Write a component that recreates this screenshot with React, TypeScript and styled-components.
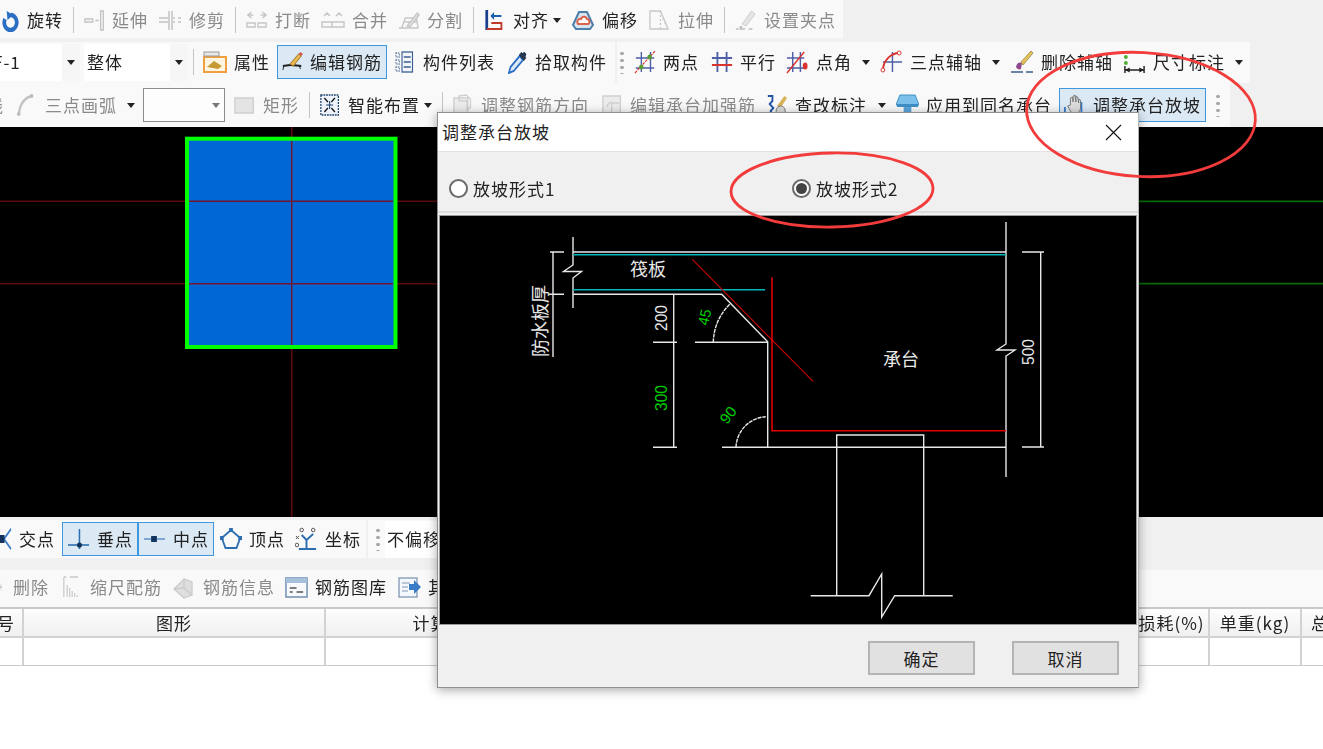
import React from "react";
import styled, { createGlobalStyle } from "styled-components";

const GlobalStyle = createGlobalStyle`
  html, body {
    margin: 0;
    padding: 0;
    background: #fff;
    overflow: hidden;
  }
  body {
    font-family: "Noto Sans CJK SC", "Noto Sans", sans-serif;
    font-size: 17px;
    letter-spacing: 1px;
    color: #222;
  }
`;

const Page = styled.div`
  position: relative;
  width: 1323px;
  height: 749px;
  overflow: hidden;
  display: flex;
  flex-direction: column;
  background: #f0f0f0;
`;

const ToolRow = styled.div<{ $h: number; $mb?: number }>`
  display: flex;
  align-items: stretch;
  gap: 2px;
  height: ${(p) => p.$h}px;
  margin-bottom: ${(p) => p.$mb ?? 0}px;
  flex: none;
`;

const Bar = styled.div<{ $w?: number; $pt?: number; $pb?: number }>`
  display: flex;
  align-items: center;
  flex: none;
  box-sizing: border-box;
  width: ${(p) => (p.$w ? `${p.$w}px` : "auto")};
  padding: ${(p) => p.$pt ?? 0}px 0 ${(p) => p.$pb ?? 0}px;
  background: #f9f9f9;
  white-space: nowrap;
  filter: blur(0.45px);
`;

const ToolBox = styled.div<{ $active?: boolean; $disabled?: boolean; $ml?: number; $flush?: boolean }>`
  display: flex;
  align-items: center;
  flex: none;
  height: 34px;
  box-sizing: border-box;
  border: 1px solid ${(p) => (p.$active ? "#3f97e0" : "transparent")};
  background: ${(p) => (p.$active ? "#dbe9f5" : "transparent")};
  padding: 0 4px;
  padding-left: ${(p) => (p.$flush ? 0 : 4)}px;
  border-left-width: ${(p) => (p.$flush ? 0 : 1)}px;
  margin-left: ${(p) => p.$ml ?? 0}px;
  color: ${(p) => (p.$disabled ? "#8a8a8a" : "#222")};
`;

const IconSlot = styled.span<{ $w: number }>`
  display: block;
  flex: none;
  width: ${(p) => p.$w}px;
  height: 24px;
  margin-right: 7px;
  svg {
    display: block;
    width: 100%;
    height: 100%;
  }
`;

const Label = styled.span`
  padding-bottom: 2px;
`;

const Caret = styled.span<{ $gap: number }>`
  flex: none;
  width: 0;
  height: 0;
  margin-left: ${(p) => p.$gap}px;
  border-left: 4px solid transparent;
  border-right: 4px solid transparent;
  border-top: 5px solid #222;
`;

const Sep = styled.span<{ $mr?: number }>`
  flex: none;
  width: 1px;
  height: 26px;
  background: #c4c4c4;
  margin: 0 ${(p) => p.$mr ?? 5}px 0 5px;
`;

const Grip = styled.span<{ $ml: number; $mr: number }>`
  flex: none;
  width: 4px;
  height: 24px;
  margin: 0 ${(p) => p.$mr}px 0 ${(p) => p.$ml}px;
  background: radial-gradient(circle, #a8a8a8 1.6px, transparent 2px) 0 0 / 4px 7px repeat-y;
`;

const SelectBox = styled.div<{ $w: number; $ml?: number }>`
  display: flex;
  align-items: center;
  flex: none;
  width: ${(p) => p.$w}px;
  height: 37px;
  margin-left: ${(p) => p.$ml ?? 0}px;
  background: #fff;
  overflow: hidden;
`;

const SelectText = styled.span<{ $pad: number }>`
  flex: 1;
  margin-left: ${(p) => p.$pad}px;
  padding-bottom: 2px;
`;

const SelectArrow = styled.span`
  display: flex;
  align-items: center;
  justify-content: center;
  flex: none;
  width: 18px;
  height: 100%;
  background: #f6f6f6;
`;

const EmptySelect = styled.div`
  display: flex;
  align-items: center;
  justify-content: flex-end;
  flex: none;
  box-sizing: border-box;
  width: 82px;
  height: 34px;
  margin-left: 3px;
  padding-right: 4px;
  background: #fdfdfd;
  border: 1px solid #8c8c8c;
`;

const GrayCaret = styled.span`
  width: 0;
  height: 0;
  border-left: 4px solid transparent;
  border-right: 4px solid transparent;
  border-top: 5px solid #777;
`;

const Canvas = styled.svg`
  display: block;
  flex: none;
  width: 1323px;
  height: 390px;
  background: #000;
`;

const SnapArea = styled.div`
  display: flex;
  flex: none;
  height: 53px;
  padding-top: 3px;
  box-sizing: border-box;
`;

const SteelBar = styled(Bar)`
  flex: none;
  height: 39px;
  width: 1323px;
  border-bottom: 2px solid #c9c9c9;
`;

const Table = styled.div`
  display: grid;
  grid-template-columns: 24px 302px 247px 562px 75px 92px 1fr;
  grid-template-rows: 29px 27px;
  flex: none;
  background: #fff;
  border-bottom: 1px solid #c9c9c9;
`;

const HeadCell = styled.div<{ $left?: boolean }>`
  display: flex;
  align-items: center;
  justify-content: ${(p) => (p.$left ? "flex-start" : "center")};
  padding-left: ${(p) => (p.$left ? "9px" : "0")};
  overflow: hidden;
  white-space: nowrap;
  background: linear-gradient(#fdfdfd, #f0f0f0);
  border-right: 2px solid #d2d2d2;
  border-bottom: 2px solid #d2d2d2;
  box-sizing: border-box;
  font-size: 17px;
  filter: blur(0.4px);
  &:nth-child(7) {
    border-right: 0;
  }
`;

const NumberCell = styled(HeadCell)`
  justify-content: flex-end;
  padding-right: 7px;
`;

const BodyCell = styled.div`
  border-right: 2px solid #d2d2d2;
  box-sizing: border-box;
  &:last-child {
    border-right: 0;
  }
`;

const Blank = styled.div`
  flex: 1;
  background: #fff;
`;

const Dialog = styled.div`
  position: absolute;
  left: 437px;
  top: 112px;
  width: 702px;
  height: 576px;
  box-sizing: border-box;
  display: flex;
  flex-direction: column;
  background: #f0f0f0;
  border: 1px solid #8f8f8f;
  border-right-color: #b5b5b5;
  box-shadow: 0 2px 10px rgba(0, 0, 0, 0.35);
`;

const TitleBar = styled.div`
  display: flex;
  align-items: center;
  justify-content: space-between;
  flex: none;
  height: 39px;
  padding: 0 16px 2px 4px;
  background: #fff;
  border-bottom: 1px solid #e2e2e2;
  box-sizing: border-box;
`;

const CloseIcon = styled.svg`
  display: block;
  width: 17px;
  height: 17px;
  margin-top: 2px;
`;

const RadioRow = styled.div`
  display: flex;
  align-items: center;
  flex: none;
  height: 61px;
  padding: 13px 0 0 11px;
  box-sizing: border-box;
  border-bottom: 2px solid #dcdcdc;
`;

const RadioLabel = styled.label<{ $w?: number }>`
  display: flex;
  align-items: center;
  gap: 5px;
  width: ${(p) => (p.$w ? `${p.$w}px` : "auto")};
  filter: blur(0.3px);
`;

const RadioMark = styled.span<{ $checked?: boolean }>`
  position: relative;
  display: block;
  flex: none;
  width: 19px;
  height: 19px;
  box-sizing: border-box;
  border-radius: 50%;
  border: 2px solid #6a6a6a;
  background: #fff;
  &::after {
    content: "";
    display: ${(p) => (p.$checked ? "block" : "none")};
    position: absolute;
    inset: 2px;
    border-radius: 50%;
    background: #444;
  }
`;

const Figure = styled.svg`
  display: block;
  flex: none;
  width: 696px;
  height: 408px;
  margin: 3px 0 0 2px;
  background: #000;
  outline: 1px solid #9a9a9a;
`;

const Footer = styled.div`
  display: flex;
  justify-content: flex-end;
  gap: 37px;
  padding: 17px 19px 0 0;
`;

const DialogButton = styled.button`
  width: 107px;
  height: 34px;
  padding: 0;
  font: inherit;
  letter-spacing: 1px;
  color: #222;
  background: #e1e1e1;
  border: 2px solid #b4b4b4;
`;

const Marks = styled.svg`
  position: absolute;
  left: 0;
  top: 0;
  width: 1323px;
  height: 749px;
  pointer-events: none;
`;

const icons: Record<string, React.ReactNode> = {
  rotate: (
    <>
      <path d="M13 7a7.500 7.500 0 1 1-7 4" fill="none" stroke="#2a6fc4" strokeWidth="4.500" />
      <path d="M8 3l8 4-7 5z" fill="#2a6fc4" />
    </>
  ),
  extend: (
    <g fill="none" stroke="#c2c2c2" strokeWidth="1.500">
      <path d="M1 11h9v3H1zM13 12.500h4" />
      <path d="M19 3h3v19h-3z" />
    </g>
  ),
  trim: (
    <g fill="none" stroke="#c2c2c2" strokeWidth="1.500">
      <path d="M1 10h9M1 14h9M15 10h2M15 14h2M20 10h3M20 14h3" />
      <path d="M11 3v19M14 3v19" />
    </g>
  ),
  breakLine: (
    <g fill="none" stroke="#c6c6c6" strokeWidth="1.500">
      <path d="M2 7h6M6 4L2 7l4 3M22 7h-6M18 4l4 3-4 3" />
      <path d="M1 15h9v4H1zM13 15h9v4h-9z" />
    </g>
  ),
  merge: (
    <g fill="none" stroke="#c6c6c6" strokeWidth="1.500">
      <path d="M3 8l3-3 3 3M15 8l3-3 3 3" />
      <path d="M1 14h22v5H1zM11 14v5" />
    </g>
  ),
  split: (
    <g fill="none" stroke="#c6c6c6" strokeWidth="1.500">
      <path d="M1 20h21M4 20l4-10h12l2 10M6 14h14" />
      <path d="M10 18L21 5l2 2-10 12z" fill="#e2e2e2" />
    </g>
  ),
  align: (
    <>
      <path d="M3 2v20" stroke="#1b3f8c" strokeWidth="3" />
      <path d="M3 21h16v-6H8" fill="none" stroke="#c0392b" strokeWidth="2" />
      <path d="M8 8h11" stroke="#1b5fae" strokeWidth="2" />
      <path d="M11 4L7 8l4 4z" fill="#1b5fae" />
    </>
  ),
  offset: (
    <>
      <path d="M8 4h8l6 13-3 4H5l-3-4z" fill="#d8e4ef" stroke="#4b7ea8" strokeWidth="2" />
      <path d="M7 16c-2-3 1-6 3-5 1-3 5-3 6 0 3 0 3 5 1 5z" fill="#fff" stroke="#d9624f" strokeWidth="2" />
    </>
  ),
  stretch: (
    <g fill="none" stroke="#c8c8c8" strokeWidth="1.400">
      <path d="M2 3h11l8 18H2z" />
      <path d="M13 3v18M16 10v2M18 14v2" strokeDasharray="2 2" />
    </g>
  ),
  grip: (
    <>
      <path d="M1 21h3M8 21h3M15 21h4" stroke="#bdbdbd" strokeWidth="1.500" />
      <rect x="5" y="18" width="3" height="4" fill="#c2c2c2" />
      <path d="M8 16L18 3l4 3-10 12z" fill="#e4e4e4" stroke="#cbcbcb" />
    </>
  ),
  property: (
    <>
      <rect x="1" y="7" width="22" height="15" fill="#fff5e0" stroke="#f0a040" strokeWidth="2" />
      <rect x="1" y="2" width="15" height="4" fill="#e8e8e8" stroke="#9a9a9a" />
      <path d="M4 17l7-6 8 5-4 3z" fill="#c59a32" />
    </>
  ),
  editSteel: (
    <>
      <path d="M1 16c4 0 4-1 9-1s8 1 12 1" fill="none" stroke="#222" strokeWidth="2" />
      <path d="M2 16l-1 4M20 16l1 3" stroke="#222" />
      <path d="M9 14L19 4l3 2-9 10z" fill="#e8b850" stroke="#a07020" />
      <path d="M19 4l2-2 3 2-2 2z" fill="#d9534f" />
    </>
  ),
  list: (
    <g>
      <path d="M1 3h4v4H1zM1 10h4v4H1zM1 17h4v4H1z" fill="none" stroke="#6b85a8" strokeWidth="1.300" strokeDasharray="1.500 1" />
      <rect x="8" y="2" width="12" height="20" fill="#f2f6fb" stroke="#3c5f90" strokeWidth="1.300" />
      <path d="M10 7h8M10 12h8M10 17h8" stroke="#3c5f90" strokeWidth="1.500" />
    </g>
  ),
  pick: (
    <>
      <path d="M1 23l2-6L14 6l4 4L7 21z" fill="#dce9f7" stroke="#2a6fc4" strokeWidth="2" />
      <path d="M13 5l3-3 1 1 3-1 2 2-1 3 1 1-3 3z" fill="#27384f" />
    </>
  ),
  twoPoint: (
    <>
      <path d="M8 2v20M18 2v20M2 8h20M2 18h20" stroke="#4e5fa8" strokeWidth="1.500" />
      <path d="M1 23L23 1" stroke="#d8332f" strokeWidth="1.200" strokeDasharray="3 1" />
      <circle cx="8" cy="17" r="2.500" fill="#5a9a32" />
      <circle cx="17" cy="7" r="2.500" fill="#5a9a32" />
    </>
  ),
  parallel: (
    <>
      <path d="M7 2v20M17 2v20" stroke="#4e5fa8" strokeWidth="2" />
      <path d="M1 8h22" stroke="#4e5fa8" strokeWidth="2" />
      <path d="M1 15h22" stroke="#d8332f" strokeWidth="2" />
    </>
  ),
  angle: (
    <>
      <path d="M7 2v20M15 2v20M1 8h18M1 18h18" stroke="#4e5fa8" strokeWidth="1.500" />
      <path d="M1 23L19 2" stroke="#d8332f" strokeWidth="1.500" />
      <ellipse cx="20" cy="16" rx="2.500" ry="3.500" fill="#d8332f" />
    </>
  ),
  threePoint: (
    <>
      <path d="M13 2v20M3 12h20" stroke="#4e5fa8" strokeWidth="1.500" />
      <path d="M3 21C3 10 12 3 20 3" fill="none" stroke="#d8332f" strokeWidth="2" />
      <circle cx="3" cy="20" r="2" fill="#fff" stroke="#d8332f" />
      <circle cx="20" cy="3" r="2" fill="#fff" stroke="#d8332f" />
    </>
  ),
  eraseAxis: (
    <>
      <path d="M1 22h12M16 22h7" stroke="#3c5f90" strokeWidth="1.600" />
      <path d="M6 17c1-5 4-5 6-4l-1 6c-2 1-4 0-5-2z" fill="#8c4a8c" />
      <path d="M11 12L21 1l2 2-10 12z" fill="#e4c25a" stroke="#9a8540" strokeWidth=".8" />
    </>
  ),
  dimension: (
    <>
      <circle cx="3" cy="7" r="2" fill="#4caf30" />
      <circle cx="3" cy="13" r="2" fill="#4caf30" />
      <path d="M2 16v7M22 16v7M2 20h20" stroke="#222" strokeWidth="1.500" />
      <path d="M2 20l5-2.500v5zM22 20l-5-2.500v5z" fill="#222" />
    </>
  ),
  arc: (
    <>
      <path d="M3 22C4 11 9 5 17 3" fill="none" stroke="#c2c2c2" strokeWidth="2.500" />
      <circle cx="3" cy="21" r="2" fill="#bbb" />
      <circle cx="17" cy="3" r="2" fill="#bbb" />
    </>
  ),
  rect: <rect x="1" y="5" width="20" height="15" fill="#e4e4e4" stroke="#cfcfcf" strokeWidth="1.500" />,
  smart: (
    <>
      <rect x="1" y="2" width="20" height="20" fill="#eef3f9" stroke="#1b3f6c" strokeWidth="1.400" strokeDasharray="2 1" />
      <path d="M5 5l4 4M17 5l-4 4M5 19l4-4M17 19l-4-4" stroke="#111" strokeWidth="1.600" />
      <path d="M11 8v8M7 12h8" stroke="#1b3f6c" strokeWidth="1.200" />
    </>
  ),
  adjustDir: (
    <g fill="none" stroke="#cfcfcf" strokeWidth="1.500">
      <path d="M1 5h16v16H1z" fill="#ececec" />
      <path d="M7 3l8-1 5 4v8l-4 3V8H7z" />
    </g>
  ),
  editCap: (
    <g fill="none" stroke="#cfcfcf" strokeWidth="1.500">
      <path d="M1 3h20v19H1z" fill="#ececec" />
      <path d="M11 22V10h9M6 14c0-3 3-5 5-5" />
    </g>
  ),
  checkMark: (
    <>
      <path d="M2 3h5v5l-3 3 4 4-3 3 3 4" fill="none" stroke="#2153a5" strokeWidth="2" />
      <path d="M12 13L20 3l3 2-8 11z" fill="#d8b35c" />
      <circle cx="16" cy="18" r="5" fill="#d9d9d9" stroke="#777" />
    </>
  ),
  apply: (
    <>
      <path d="M4 2h16l4 10H0z" fill="#7cc0ec" stroke="#3f8fc4" />
      <rect x="8" y="12" width="8" height="12" fill="#5aa5db" />
      <rect x="1" y="11" width="22" height="3" fill="#3f8fc4" />
    </>
  ),
  hand: (
    <>
      <path d="M1 21h7M1 14v7" stroke="#3a7bc8" strokeWidth="2" fill="none" />
      <path d="M19 9v12" stroke="#3a7bc8" strokeWidth="2" />
      <path d="M4 13l3-1V5l2-1 1 5V3l2-1 1 7V3l2 1 1 6V6l2 1v9l-3 5H9z" fill="#dcdcdc" stroke="#777" strokeWidth="1" />
    </>
  ),
  cross: (
    <>
      <path d="M22 2L8 12l14 10" fill="none" stroke="#3a7bc8" strokeWidth="2.600" />
      <rect x="0" y="8" width="9" height="8" fill="#13335f" />
    </>
  ),
  foot: (
    <>
      <path d="M1 18h22" stroke="#2d6eb0" strokeWidth="1.600" />
      <path d="M13 2v20" stroke="#2d6eb0" strokeWidth="1.600" />
      <circle cx="13" cy="18" r="2.600" fill="#13335f" />
    </>
  ),
  middle: (
    <>
      <path d="M1 12h22" stroke="#7fa9d4" strokeWidth="2" />
      <rect x="8.500" y="9" width="6" height="6" fill="#13335f" />
    </>
  ),
  vertex: (
    <>
      <path d="M12 3l10 8-4 10H6L2 11z" fill="none" stroke="#2d6eb0" strokeWidth="2" />
      <rect x="10" y="1" width="4" height="4" fill="#2d6eb0" />
      <rect x="0" y="9" width="4" height="4" fill="#2d6eb0" />
      <rect x="20" y="9" width="4" height="4" fill="#2d6eb0" />
    </>
  ),
  coord: (
    <>
      <path d="M12 21v-8L7 8M12 13l7-6M4 22h18" fill="none" stroke="#2d6eb0" strokeWidth="2" />
      <g fill="none" stroke="#555" strokeWidth="1">
        <circle cx="7" cy="3" r="1.800" />
        <circle cx="19" cy="3" r="1.800" />
        <circle cx="2" cy="18" r="1.800" />
        <path d="M1 9l3 3M4 9l-3 3" />
      </g>
    </>
  ),
  arrowCut: <path d="M0 12h6M3 9l3 3-3 3" fill="none" stroke="#bcbcbc" strokeWidth="1.500" />,
  scale: (
    <g stroke="#c8c8c8" strokeWidth="1.400" fill="none">
      <path d="M1 2h3M8 2h10M1 2v20" />
      <path d="M5 22V10M8 22V13M11 22v-6M14 22v-4M17 22v-2" />
    </g>
  ),
  info: (
    <g fill="#dedede" stroke="#cbcbcb" strokeWidth="1.300">
      <path d="M2 14L12 4l8 3v13l-8 3z" />
      <path d="M12 4v9L2 14M12 13l8 7" fill="none" />
    </g>
  ),
  library: (
    <>
      <rect x="1" y="3" width="22" height="19" fill="#f7f9fc" stroke="#6d8db3" strokeWidth="1.500" />
      <rect x="1" y="3" width="22" height="5" fill="#a7bfdb" />
      <path d="M5 13h7M5 17h3M12 17h7" stroke="#555" strokeWidth="1.400" />
    </>
  ),
  other: (
    <>
      <rect x="2" y="3" width="18" height="19" fill="#f4f7fb" stroke="#8097b3" strokeWidth="1.300" />
      <path d="M5 8h8M5 12h6M5 16h6" stroke="#8097b3" />
      <path d="M12 9h5V5l7 7-7 7v-4h-5z" fill="#3a7bc8" />
    </>
  ),
};

interface ToolProps {
  label?: string;
  icon?: string;
  w?: number;
  caret?: number;
  disabled?: boolean;
  active?: boolean;
  ml?: number;
  flush?: boolean;
}

function Tool({ label, icon, w = 22, caret, disabled, active, ml, flush }: ToolProps) {
  return (
    <ToolBox $active={active} $disabled={disabled} $ml={ml} $flush={flush}>
      {icon && (
        <IconSlot $w={w}>
          <svg viewBox="0 0 24 24" preserveAspectRatio="none">
            {icons[icon]}
          </svg>
        </IconSlot>
      )}
      <Label>{label}</Label>
      {caret !== undefined && <Caret $gap={caret} />}
    </ToolBox>
  );
}

function ComboBox({ text, w, pad, ml }: { text: string; w: number; pad: number; ml?: number }) {
  return (
    <SelectBox $w={w} $ml={ml}>
      <SelectText $pad={pad}>{text}</SelectText>
      <SelectArrow>
        <Caret $gap={0} />
      </SelectArrow>
    </SelectBox>
  );
}

const DIAGRAM_WHITE = "#e8e8e8";

function Diagram() {
  return (
    <Figure viewBox="440 216 696 408">
      <g fill="none" stroke={DIAGRAM_WHITE} strokeWidth="1.400">
        <path d="M573 237V265L563.500 271.500H581.500L573 278V308" />
        <path d="M573 252H1006M573 294.300H721.700L767.700 341.700V447.300" />
        <path d="M550 252H564M549 294.300H564M553 252V357" />
        <path d="M673.700 294.300V447.300M653 342.300H677M653 447.300H677" />
        <path d="M695 342.300H767.700M722 447.300H1006" />
        <path d="M713.300 342.300A54.400 54.400 0 0 1 730 304" strokeDasharray="4 .8" />
        <path d="M736 447.300A31.700 31.700 0 0 1 765.700 416.700" strokeDasharray="4 .8" />
        <path d="M1006 222V344L997 350H1015L1006 356V477" />
        <path d="M1040.700 252V447M1022 252H1044M1022 447H1044" />
        <path d="M836.700 595.700V435H923.700V595.700" />
        <path d="M810.700 595.700H869L881.700 574V617L894.700 595.700H952.700" />
      </g>
      <g stroke="#00b8b8" strokeWidth="1.600">
        <path d="M573 254.700H1006" />
        <path d="M573 289.700H765" />
      </g>
      <path d="M692.300 259.300L813.300 381.700" stroke="#c00000" strokeWidth="1.200" />
      <path d="M772 277.300V430.700H1006" fill="none" stroke="#e00000" strokeWidth="1.600" />
      <g fontFamily='"Noto Sans CJK SC", sans-serif' fontSize="18" fill={DIAGRAM_WHITE} letterSpacing="0">
        <text x="630" y="276">筏板</text>
        <text x="883" y="366">承台</text>
        <text transform="translate(547 357) rotate(-90)">防水板厚</text>
      </g>
      <g fontFamily='"Liberation Sans", sans-serif' fontSize="17" letterSpacing="0">
        <text transform="translate(667 331) rotate(-90)" fill={DIAGRAM_WHITE} textLength="26" lengthAdjust="spacingAndGlyphs">200</text>
        <text transform="translate(667 411) rotate(-90)" fill="#00d000" textLength="26" lengthAdjust="spacingAndGlyphs">300</text>
        <text transform="translate(1034 365) rotate(-90)" fill={DIAGRAM_WHITE} textLength="26" lengthAdjust="spacingAndGlyphs">500</text>
        <text transform="translate(708 326) rotate(-78)" fill="#00d000" fontSize="15" textLength="16" lengthAdjust="spacingAndGlyphs">45</text>
        <text transform="translate(727 425) rotate(-52)" fill="#00d000" fontSize="15" textLength="17" lengthAdjust="spacingAndGlyphs">90</text>
      </g>
    </Figure>
  );
}

export default function App() {
  return (
    <Page>
      <GlobalStyle />

      <ToolRow $h={38} $mb={4}>
        <Bar $w={843} $pt={2}>
          <Tool flush icon="rotate" w={20} label="旋转" />
          <Sep />
          <Tool disabled icon="extend" w={21} label="延伸" />
          <Tool disabled icon="trim" w={24} label="修剪" />
          <Sep />
          <Tool disabled icon="breakLine" label="打断" />
          <Tool disabled icon="merge" w={24} label="合并" />
          <Tool disabled icon="split" label="分割" />
          <Sep />
          <Tool icon="align" label="对齐" caret={4} />
          <Tool icon="offset" w={24} label="偏移" />
          <Tool disabled icon="stretch" w={23} label="拉伸" />
          <Sep />
          <Tool disabled icon="grip" label="设置夹点" />
        </Bar>
      </ToolRow>

      <ToolRow $h={41}>
        <Bar $w={615} $pb={1}>
          <ComboBox text="F-1" w={80} pad={-7} />
          <ComboBox text="整体" w={104} pad={3} ml={4} />
          <Sep $mr={4} />
          <Tool icon="property" w={24} label="属性" />
          <Tool active ml={2} icon="editSteel" w={21} label="编辑钢筋" />
          <Tool ml={3} icon="list" w={21} label="构件列表" />
          <Tool ml={3} icon="pick" w={20} label="拾取构件" />
        </Bar>
        <Bar $w={633} $pb={1}>
          <Grip $ml={3} $mr={5} />
          <Tool icon="twoPoint" label="两点" />
          <Tool icon="parallel" ml={2} label="平行" />
          <Tool icon="angle" w={23} label="点角" caret={10} />
          <Tool icon="threePoint" w={23} label="三点辅轴" caret={10} />
          <Tool icon="eraseAxis" w={24} label="删除辅轴" />
          <Tool icon="dimension" w={23} label="尺寸标注" caret={10} />
        </Bar>
      </ToolRow>

      <ToolRow $h={44}>
        <Bar $w={1230}>
          <Tool disabled ml={-14} flush label="线" />
          <Tool disabled ml={2} icon="arc" label="三点画弧" caret={10} />
          <EmptySelect>
            <GrayCaret />
          </EmptySelect>
          <Tool disabled ml={4} icon="rect" label="矩形" />
          <Sep />
          <Tool icon="smart" w={21} label="智能布置" caret={4} />
          <Sep />
          <Tool disabled icon="adjustDir" w={21} label="调整钢筋方向" />
          <Tool disabled ml={3} icon="editCap" w={21} label="编辑承台加强筋" />
          <Tool icon="checkMark" label="查改标注" caret={11} />
          <Tool icon="apply" w={23} label="应用到同名承台" />
          <Tool active ml={2} icon="hand" label="调整承台放坡" />
          <Grip $ml={10} $mr={0} />
        </Bar>
      </ToolRow>

      <Canvas viewBox="0 127 1323 390">
        <g stroke="#5c0a10" strokeWidth="1.600">
          <path d="M0 201.300H438M0 283.700H438M291.700 127V517" />
        </g>
        <g stroke="#066a06" strokeWidth="1.800">
          <path d="M1139 201.300H1323M1139 283.700H1323" />
        </g>
        <rect x="187" y="138.700" width="208.500" height="208.300" fill="#0068d6" stroke="#00ff00" strokeWidth="4" />
        <path d="M189 201.300H393M189 283.700H393M291.700 141V345" stroke="#701830" strokeWidth="1.500" />
      </Canvas>

      <SnapArea>
        <ToolRow $h={38} as="div">
          <Bar $w={366}>
            <Tool flush icon="cross" w={12} label="交点" />
            <Tool active ml={2} icon="foot" w={23} label="垂点" />
            <Tool active icon="middle" w={23} label="中点" />
            <Tool ml={1} icon="vertex" label="顶点" />
            <Tool icon="coord" w={23} label="坐标" />
          </Bar>
          <Bar $w={70}>
            <Grip $ml={8} $mr={5} />
            <ComboBox text="不偏移" w={100} pad={2} />
          </Bar>
        </ToolRow>
      </SnapArea>

      <SteelBar $pb={3}>
        <Tool disabled flush icon="arrowCut" w={6} label="删除" />
        <Tool disabled ml={4} icon="scale" w={20} label="缩尺配筋" />
        <Tool disabled icon="info" w={24} label="钢筋信息" />
        <Tool icon="library" w={23} label="钢筋图库" />
        <Tool icon="other" w={24} label="其他" />
      </SteelBar>

      <Table>
        <NumberCell>号</NumberCell>
        <HeadCell>图形</HeadCell>
        <HeadCell>计算公式</HeadCell>
        <HeadCell>公式描述</HeadCell>
        <HeadCell>损耗(%)</HeadCell>
        <HeadCell>单重(kg)</HeadCell>
        <HeadCell $left>总重(kg)</HeadCell>
        <BodyCell />
        <BodyCell />
        <BodyCell />
        <BodyCell />
        <BodyCell />
        <BodyCell />
        <BodyCell />
      </Table>
      <Blank />

      <Dialog>
        <TitleBar>
          调整承台放坡
          <CloseIcon viewBox="0 0 17 17">
            <path d="M1 1L16 16M16 1L1 16" stroke="#111" strokeWidth="1.100" />
          </CloseIcon>
        </TitleBar>
        <RadioRow>
          <RadioLabel $w={343}>
            <RadioMark />
            放坡形式1
          </RadioLabel>
          <RadioLabel>
            <RadioMark $checked />
            放坡形式2
          </RadioLabel>
        </RadioRow>
        <Diagram />
        <Footer>
          <DialogButton>确定</DialogButton>
          <DialogButton>取消</DialogButton>
        </Footer>
      </Dialog>

      <Marks viewBox="0 0 1323 749">
        <g fill="none" stroke="#f23b3b" strokeWidth="2.800">
          <ellipse cx="1141" cy="114.500" rx="114.500" ry="62" transform="rotate(3 1141 114.500)" />
          <ellipse cx="832" cy="190" rx="101" ry="37" transform="rotate(-1 832 190)" />
        </g>
      </Marks>
    </Page>
  );
}
